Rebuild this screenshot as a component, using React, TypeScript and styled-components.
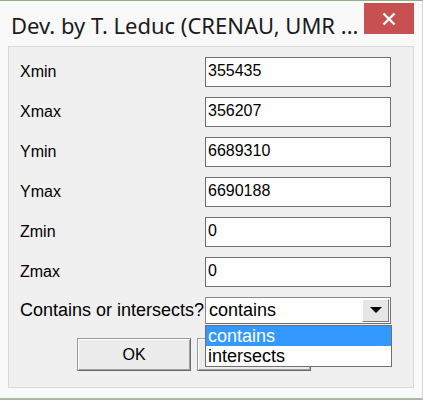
import React from 'react';
import styled, { createGlobalStyle } from 'styled-components';

const GlobalStyle = createGlobalStyle`
    html, body {
        margin: 0;
        padding: 0;
        background: #ffffff;
    }
`;

const Window = styled.div`
    box-sizing: border-box;
    width: 423px;
    height: 400px;
    background: #f9f9f9;
    border-top: 1px solid #8fb081;
    border-bottom: 2px solid #a9b9a3;
    border-right: 1px solid #d4d4d4;
    display: flex;
    flex-direction: column;
    position: relative;
`;

const TitleBar = styled.div`
    height: 45px;
    display: flex;
    align-items: flex-start;
    justify-content: space-between;
`;

const Title = styled.div`
    font-family: 'Noto Sans', 'Open Sans', sans-serif;
    font-size: 22px;
    line-height: 30px;
    color: #1b1b1b;
    padding: 9px 0 0 11px;
    white-space: nowrap;
`;

const CloseButton = styled.div`
    width: 50px;
    height: 31px;
    margin: 2px 8px 0 0;
    background: #c75050;
    display: flex;
    align-items: center;
    justify-content: center;
`;

const Panel = styled.div`
    box-sizing: border-box;
    margin: 0 8px 0 8px;
    height: 342px;
    background: #f0f0f0;
    border: 1px solid #d9d9d9;
    padding: 10px 0 0 11px;
    position: relative;
`;

const Form = styled.div`
    display: grid;
    grid-template-columns: 185px 186px;
    row-gap: 10px;
    align-items: center;
`;

const Label = styled.div<{ $big?: boolean }>`
    font-family: 'Liberation Sans', Arial, sans-serif;
    font-size: ${({ $big }) => ($big ? '18px' : '16px')};
    color: #000;
    white-space: nowrap;
`;

const Field = styled.div`
    box-sizing: border-box;
    height: 30px;
    background: #fff;
    border: 1px solid #6f6f6f;
    padding: 4px 0 0 2px;
    font-family: 'Liberation Sans', Arial, sans-serif;
    font-size: 16px;
    color: #000;
`;

const Combo = styled.div`
    box-sizing: border-box;
    height: 27px;
    background: #fff;
    border: 1px solid #6f6f6f;
    border-top-color: #8a8a8a;
    border-left-color: #8a8a8a;
    display: flex;
    align-items: center;
    justify-content: space-between;
    font-family: 'Liberation Sans', Arial, sans-serif;
    font-size: 18px;
    color: #000;
    padding: 0 1px 0 3px;
`;

const ArrowButton = styled.div`
    box-sizing: border-box;
    width: 27px;
    height: 23px;
    background: #e6e6e6;
    border: 1px solid;
    border-color: #ffffff #7a7a7a #7a7a7a #ffffff;
    display: flex;
    align-items: center;
    justify-content: center;
`;

const Buttons = styled.div`
    display: flex;
    gap: 6px;
    margin: 14px 0 0 57px;
`;

const Button = styled.div`
    box-sizing: border-box;
    width: 114px;
    height: 33px;
    background: #ececec;
    border: 1px solid;
    border-color: #9a9a9a #6a6a6a #6a6a6a #9a9a9a;
    box-shadow: inset 1px 1px 0 #ffffff, inset -1px -1px 0 #a0a0a0;
    display: flex;
    align-items: center;
    justify-content: center;
    font-family: 'Liberation Sans', Arial, sans-serif;
    font-size: 16px;
    color: #000;
`;

const DropList = styled.div`
    box-sizing: border-box;
    position: absolute;
    left: 196px;
    top: 278px;
    width: 187px;
    background: #fff;
    border: 1px solid #6f6f6f;
    font-family: 'Liberation Sans', Arial, sans-serif;
    font-size: 18px;
`;

const Option = styled.div<{ $selected?: boolean }>`
    height: 20px;
    line-height: 20px;
    padding-left: 2px;
    background: ${({ $selected }) => ($selected ? '#3399ff' : '#fff')};
    color: ${({ $selected }) => ($selected ? '#fff' : '#000')};
`;

const fields = [
    { label: 'Xmin', value: '355435' },
    { label: 'Xmax', value: '356207' },
    { label: 'Ymin', value: '6689310' },
    { label: 'Ymax', value: '6690188' },
    { label: 'Zmin', value: '0' },
    { label: 'Zmax', value: '0' },
];

const App = () => {
    return (
        <>
            <GlobalStyle />
            <Window>
                <TitleBar>
                    <Title>Dev. by T. Leduc (CRENAU, UMR ...</Title>
                    <CloseButton>
                        <svg width="14" height="14" viewBox="0 0 14 14">
                            <path d="M1.5 1.5 L12.5 12.5 M12.5 1.5 L1.5 12.5" stroke="#fff" strokeWidth="2.4" />
                        </svg>
                    </CloseButton>
                </TitleBar>
                <Panel>
                    <Form>
                        {fields.map((f) => (
                            <React.Fragment key={f.label}>
                                <Label>{f.label}</Label>
                                <Field>{f.value}</Field>
                            </React.Fragment>
                        ))}
                        <Label $big>Contains or intersects?</Label>
                        <Combo>
                            <span>contains</span>
                            <ArrowButton>
                                <svg width="12" height="7" viewBox="0 0 12 7">
                                    <path d="M0 0 L12 0 L6 6 Z" fill="#000" />
                                </svg>
                            </ArrowButton>
                        </Combo>
                    </Form>
                    {/* second button sits under the open list, its caption is hidden */}
                    <Buttons>
                        <Button>OK</Button>
                        <Button />
                    </Buttons>
                    <DropList>
                        <Option $selected>contains</Option>
                        <Option>intersects</Option>
                    </DropList>
                </Panel>
            </Window>
        </>
    );
};

export default App;
